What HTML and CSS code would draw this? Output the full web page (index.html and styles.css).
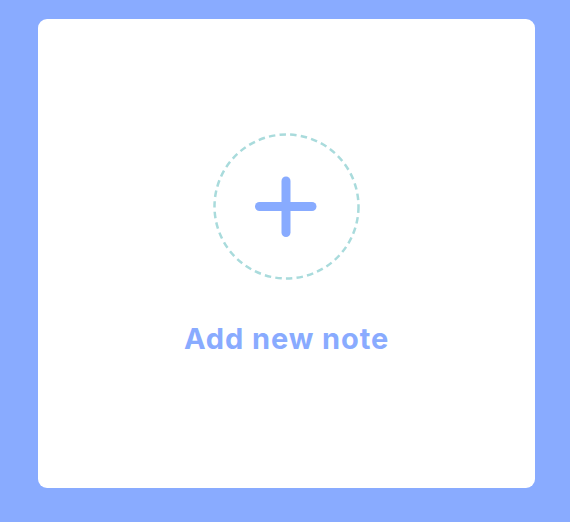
FILE: index.html
```html
<!DOCTYPE html>
<html>
<head>
<meta charset="utf-8">
<link rel="stylesheet" href="styles.css">
</head>
<body>
<div class="page">
  <div class="card">
    <div class="add-icon">
      <svg width="147" height="147" viewBox="0 0 147 147">
        <circle cx="73.5" cy="73.5" r="72" fill="none" stroke="#a9dbdc" stroke-width="2.5" stroke-dasharray="6.5 4.2"/>
        <line x1="46.5" y1="73.5" x2="99" y2="73.5" stroke="#88abff" stroke-width="9" stroke-linecap="round"/>
        <line x1="73" y1="48" x2="73" y2="99.5" stroke="#88abff" stroke-width="9" stroke-linecap="round"/>
      </svg>
    </div>
    <div class="label">Add new note</div>
  </div>
</div>
</body>
</html>
```
FILE: styles.css
```css
html, body {
  margin: 0;
  padding: 0;
  background: #89abff;
}
.page {
  width: 570px;
  height: 522px;
  padding: 19px 35px 34px 38px;
  box-sizing: border-box;
}
.card {
  width: 497px;
  height: 469px;
  background: #ffffff;
  border-radius: 9px;
  display: flex;
  flex-direction: column;
  align-items: center;
  padding-top: 114px;
  box-sizing: border-box;
}
.add-icon {
  width: 147px;
  height: 147px;
}
.add-icon svg {
  display: block;
}
.label {
  margin-top: 42px;
  font-family: "Inter", "Noto Sans", sans-serif;
  font-weight: 700;
  font-size: 29px;
  line-height: 34px;
  color: #89abff;
  letter-spacing: 0.9px;
}
```
